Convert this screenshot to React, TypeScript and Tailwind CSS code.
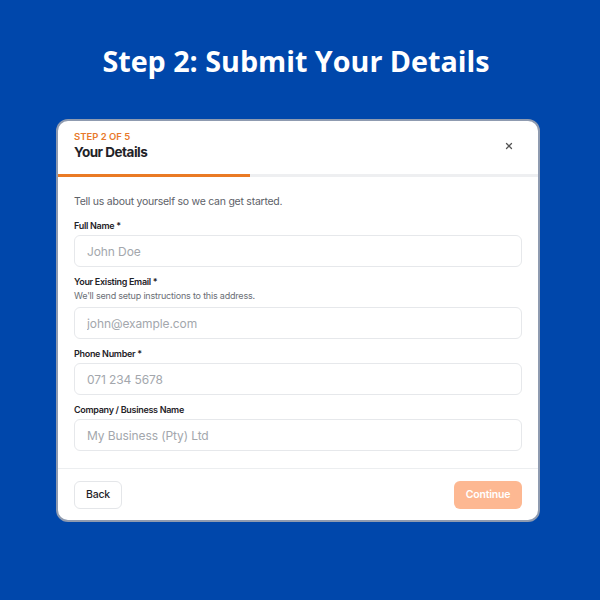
import { X } from 'lucide-react'

const fields = [
  { label: 'Full Name *', placeholder: 'John Doe' },
  {
    label: 'Your Existing Email *',
    hint: "We'll send setup instructions to this address.",
    placeholder: 'john@example.com',
  },
  { label: 'Phone Number *', placeholder: '071 234 5678' },
  { label: 'Company / Business Name', placeholder: 'My Business (Pty) Ltd' },
]

function Field({ label, hint, placeholder }: { label: string; hint?: string; placeholder: string }) {
  return (
    <div className="flex flex-col">
      <label className="text-[9px] leading-[12px] font-semibold tracking-[-0.3px] text-[#1f2328]">{label}</label>
      {hint && <p className="mt-[2px] text-[9px] leading-[12px] tracking-[-0.2px] text-[#6b6f76]">{hint}</p>}
      <input
        placeholder={placeholder}
        className={`${hint ? 'mt-[5px]' : 'mt-[3px]'} h-[32px] w-full rounded-[6px] border border-[#e6e8eb] px-[12px] text-[12px] tracking-[-0.1px] text-[#333] placeholder:text-[#a3a7ad] outline-none`}
      />
    </div>
  )
}

export default function App() {
  return (
    <div
      className="w-[600px] h-[600px] bg-[#0047AB] flex flex-col items-center"
      style={{ fontFamily: 'Inter, "Noto Sans", sans-serif' }}
    >
      <h1
        className="mt-[43px] -translate-x-[4px] text-white text-[28.7px] leading-[36px] font-bold"
        style={{ fontFamily: '"Open Sans", sans-serif' }}
      >
        Step 2: Submit Your Details
      </h1>

      <div className="mt-[40px] w-[484px] -translate-x-[2px] rounded-[12px] border-2 border-[#8f9bb0] bg-white overflow-hidden">
        <div className="flex items-center justify-between px-[16px] pt-[10px] pb-[13px]">
          <div>
            <div className="text-[9.5px] leading-[12px] font-semibold text-[#e8792b]">STEP 2 OF 5</div>
            <div className="text-[13.5px] leading-[18px] font-bold tracking-[-0.5px] text-[#1f2328]">Your Details</div>
          </div>
          <X className="w-[10px] h-[10px] text-[#555] mr-[8px]" strokeWidth={3} />
        </div>

        <div className="h-[3px] bg-[#eeeff1]">
          <div className="h-full w-[40%] bg-[#ea7a24]" />
        </div>

        <div className="px-[16px] pt-[18px] pb-[17px] border-b border-[#eceef0]">
          <p className="text-[10.5px] leading-[14px] tracking-[-0.25px] text-[#5d6168]">
            Tell us about yourself so we can get started.
          </p>
          <div className="mt-[11px] flex flex-col gap-[9px]">
            {fields.map(f => (
              <Field key={f.label} {...f} />
            ))}
          </div>
        </div>

        <div className="flex items-center justify-between px-[16px] pt-[12px] pb-[11px]">
          <button className="h-[28px] w-[48px] rounded-[6px] border border-[#e4e6e9] text-[10.5px] font-medium tracking-[-0.2px] text-[#1f2328]">
            Back
          </button>
          <button className="h-[28px] w-[68px] rounded-[6px] bg-[#fdb892] text-[10.5px] font-semibold tracking-[-0.2px] text-white">
            Continue
          </button>
        </div>
      </div>
    </div>
  )
}
